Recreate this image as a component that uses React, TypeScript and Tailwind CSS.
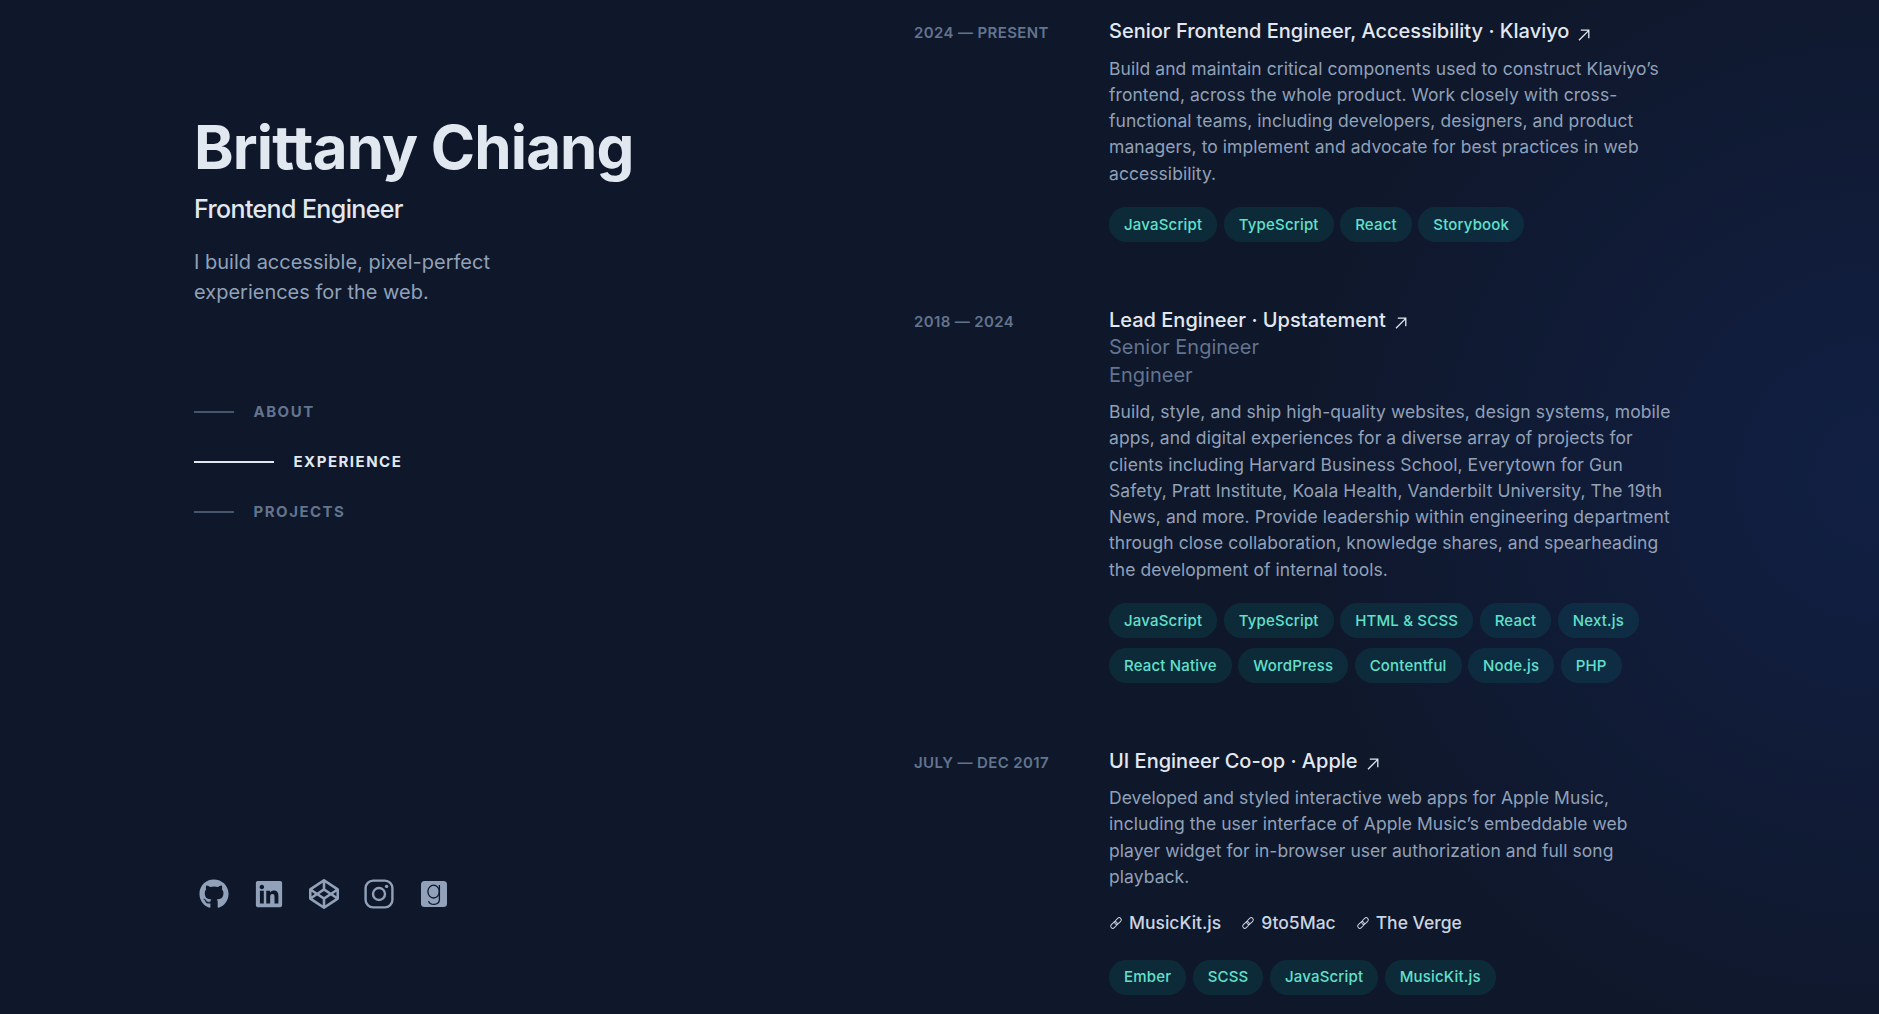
import { FaCodepen, FaGithub, FaLinkedin } from "react-icons/fa";

const jobs = [
  {
    dates: "2024 — Present",
    title: "Senior Frontend Engineer, Accessibility · Klaviyo",
    roles: [],
    body: "Build and maintain critical components used to construct Klaviyo’s frontend, across the whole product. Work closely with cross-functional teams, including developers, designers, and product managers, to implement and advocate for best practices in web accessibility.",
    links: [],
    tags: ["JavaScript", "TypeScript", "React", "Storybook"],
  },
  {
    dates: "2018 — 2024",
    title: "Lead Engineer · Upstatement",
    roles: ["Senior Engineer", "Engineer"],
    body: "Build, style, and ship high-quality websites, design systems, mobile apps, and digital experiences for a diverse array of projects for clients including Harvard Business School, Everytown for Gun Safety, Pratt Institute, Koala Health, Vanderbilt University, The 19th News, and more. Provide leadership within engineering department through close collaboration, knowledge shares, and spearheading the development of internal tools.",
    links: [],
    tags: ["JavaScript", "TypeScript", "HTML & SCSS", "React", "Next.js", "React Native", "WordPress", "Contentful", "Node.js", "PHP"],
  },
  {
    dates: "July — Dec 2017",
    title: "UI Engineer Co-op · Apple",
    roles: [],
    body: "Developed and styled interactive web apps for Apple Music, including the user interface of Apple Music’s embeddable web player widget for in-browser user authorization and full song playback.",
    links: ["MusicKit.js", "9to5Mac", "The Verge"],
    tags: ["Ember", "SCSS", "JavaScript", "MusicKit.js"],
  },
];

function ArrowIcon() {
  return (
    <svg viewBox="0 0 12 12" fill="none" stroke="currentColor" strokeWidth="1.3" className="ml-[9px] inline-block size-3 translate-y-[2px]">
      <path d="M1 11.2 10.8 1.4M2.8 1.2h8v8" />
    </svg>
  );
}

function ChainIcon() {
  return (
    <svg viewBox="0 0 14 14" fill="none" stroke="currentColor" strokeWidth="1" className="mr-[6px] size-[14px]">
      <g transform="rotate(-45 7 7)">
        <rect x="0.4" y="4.9" width="7.6" height="4.2" rx="2.1" />
        <rect x="6" y="4.9" width="7.6" height="4.2" rx="2.1" />
      </g>
    </svg>
  );
}

function InstagramIcon() {
  return (
    <svg viewBox="0 0 30 30" fill="none" stroke="currentColor" className="size-[30px]">
      <rect x="1.6" y="1.6" width="26.8" height="26.8" rx="7.5" strokeWidth="2.4" />
      <circle cx="15" cy="15" r="6" strokeWidth="2.4" />
      <circle cx="22.6" cy="7.4" r="1.7" fill="currentColor" stroke="none" />
    </svg>
  );
}

function GoodreadsIcon() {
  return (
    <svg viewBox="0 0 30 30" fill="none" className="size-[30px]">
      <rect x="2" y="2" width="26" height="26" rx="3.5" fill="currentColor" />
      <ellipse cx="14.6" cy="12.6" rx="5.7" ry="6.4" stroke="#0f172a" strokeWidth="1.3" />
      <path d="M20.4 6v14.6c0 3.2-2.2 4.8-5.5 4.8-2.8 0-4.8-1.2-5.3-3.3" stroke="#0f172a" strokeWidth="1.3" />
    </svg>
  );
}

function NavItem({ label, active }: { label: string; active?: boolean }) {
  return (
    <a className="flex h-[50px] items-center">
      <span className={active ? "mr-[19.5px] h-0.5 w-20 bg-slate-200" : "mr-[19.5px] h-0.5 w-10 bg-slate-600"} />
      <span className={active ? "text-[15px] font-bold uppercase tracking-widest text-slate-200" : "text-[15px] font-bold uppercase tracking-widest text-slate-500"}>
        {label}
      </span>
    </a>
  );
}

function Job({ job }: { job: (typeof jobs)[number] }) {
  return (
    <li className="mb-[64.25px] grid grid-cols-[179px_566px] gap-4">
      <div className="mt-[2px] text-[15px] leading-[25px] font-semibold tracking-wide text-slate-500 uppercase">{job.dates}</div>
      <div>
        <h3 className="text-[20px] leading-[27.5px] font-medium text-slate-200">
          {job.title}
          <ArrowIcon />
        </h3>
        {job.roles.map((role) => (
          <div key={role} className="text-[20px] leading-[27.5px] text-slate-500">
            {role}
          </div>
        ))}
        <p className="mt-2.5 text-[17.5px] leading-[26.25px] tracking-[0.06px] text-slate-400">{job.body}</p>
        {job.links.length > 0 && (
          <ul className="mt-[19px] flex gap-5">
            {job.links.map((link) => (
              <li key={link} className="flex items-center text-[17.5px] leading-[27.5px] font-medium text-slate-300">
                <ChainIcon />
                {link}
              </li>
            ))}
          </ul>
        )}
        <ul className={job.links.length > 0 ? "mt-[13.5px] flex flex-wrap" : "mt-[10.5px] flex flex-wrap"}>
          {job.tags.map((tag) => (
            <li key={tag} className="mt-2.5 mr-[6.5px] flex h-[35px] items-center rounded-full bg-teal-400/10 px-[15px] text-[15px] font-medium tracking-[0.18px] text-[#62e0cc]">
              {tag}
            </li>
          ))}
        </ul>
      </div>
    </li>
  );
}

export default function App() {
  return (
    <div className="h-screen overflow-hidden bg-[#0f172a] bg-[radial-gradient(750px_at_1879px_480px,rgba(29,78,216,0.15),transparent_80%)] [font-family:Inter,sans-serif]">
      <div className="ml-[194px] flex w-[1480px]">
        <header className="flex h-screen w-[720px] shrink-0 flex-col justify-between pt-[117px] pb-[105px]">
          <div>
            <h1 className="text-[60px] leading-none font-bold tracking-[-0.86px] text-slate-200">Brittany Chiang</h1>
            <h2 className="mt-[15px] text-[25px] leading-[35px] font-medium tracking-tight text-slate-200">Frontend Engineer</h2>
            <p className="mt-5 w-[400px] text-[20px] leading-[30px] text-slate-400">I build accessible, pixel-perfect experiences for the web.</p>
            <nav className="mt-20">
              <NavItem label="About" />
              <NavItem label="Experience" active />
              <NavItem label="Projects" />
            </nav>
          </div>
          <div className="ml-[5px] flex gap-[25px] text-slate-400">
            <FaGithub className="size-[30px]" />
            <FaLinkedin className="size-[30px]" />
            <FaCodepen className="size-[30px]" />
            <InstagramIcon />
            <GoodreadsIcon />
          </div>
        </header>
        <main className="w-[760px] pt-[18px]">
          <ol>
            {jobs.map((job) => (
              <Job key={job.title} job={job} />
            ))}
          </ol>
        </main>
      </div>
    </div>
  );
}
